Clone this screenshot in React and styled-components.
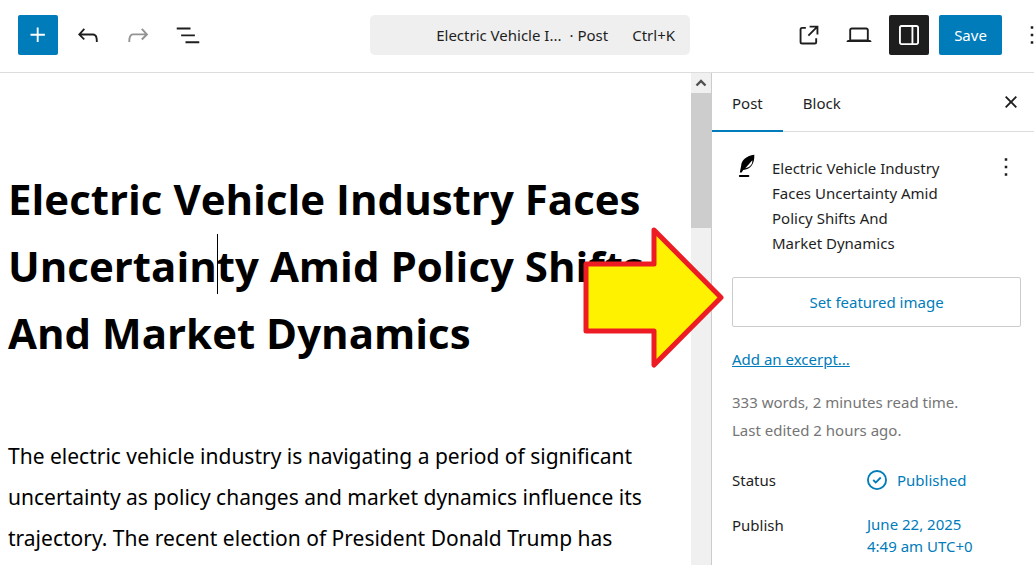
import styled, { createGlobalStyle } from 'styled-components';

const ICONS = {
  plus: 'M11 12.5V17.5H12.5V12.5H17.5V11H12.5V6H11V11H6V12.5H11Z',
  undo: 'M18.3 11.7c-.6-.6-1.4-.9-2.3-.9H6.7l2.9-3.3-1.1-1-4.5 5L8.5 16l1-1-2.7-2.7H16c.5 0 .9.2 1.3.5 1 1 1 3.4 1 4.5v.3h1.5v-.2c0-1.5 0-4.3-1.5-5.7z',
  redo: 'M15.6 6.5l-1.1 1 2.9 3.3H8c-.9 0-1.7.3-2.3.9-1.4 1.5-1.4 4.2-1.4 5.6v.2h1.5v-.3c0-1.1 0-3.5 1-4.5.3-.3.7-.5 1.3-.5h9.2L14.5 15l1.1 1.1 4.6-4.6-4.6-5z',
  listView: 'M3 6h11v1.5H3V6Zm3.5 5.5h11V13h-11v-1.5ZM21 17H10v1.5h11V17Z',
  external:
    'M19.5 4.5h-7V6h4.44l-5.97 5.97 1.06 1.06L18 7.06v4.44h1.5v-7Zm-13 1a2 2 0 0 0-2 2v10a2 2 0 0 0 2 2h10a2 2 0 0 0 2-2v-3H17v3a.5.5 0 0 1-.5.5h-10a.5.5 0 0 1-.5-.5v-10a.5.5 0 0 1 .5-.5h3V5.5h-3Z',
  desktop:
    'M20.5 16h-.7V8c0-1.1-.9-2-2-2H6.2c-1.1 0-2 .9-2 2v8h-.7c-.8 0-1.5.7-1.5 1.5h20c0-.8-.7-1.5-1.5-1.5zM5.7 8c0-.3.2-.5.5-.5h11.6c.3 0 .5.2.5.5v7.6H5.7V8z',
  drawer:
    'M18 4H6c-1.1 0-2 .9-2 2v12c0 1.1.9 2 2 2h12c1.1 0 2-.9 2-2V6c0-1.1-.9-2-2-2zm-4 14.5H6c-.3 0-.5-.2-.5-.5V6c0-.3.2-.5.5-.5h8v13zm4.5-.5c0 .3-.2.5-.5.5h-2.5v-13H18c.3 0 .5.2.5.5v12z',
  more: 'M13 19h-2v-2h2v2zm0-6h-2v-2h2v2zm0-6h-2V5h2v2z',
  close:
    'M12 13.06l3.712 3.713 1.061-1.06L13.061 12l3.712-3.712-1.06-1.06L12 10.938 8.288 7.227l-1.061 1.06L10.939 12l-3.712 3.712 1.06 1.061L12 13.061z',
  published:
    'M12 18.5a6.5 6.5 0 1 1 0-13 6.5 6.5 0 0 1 0 13ZM4 12a8 8 0 1 1 16 0 8 8 0 0 1-16 0Zm11.53-1.47-1.06-1.06L11 12.94l-1.47-1.47-1.06 1.06L11 15.06l4.53-4.53Z',
};

function Icon({ name }) {
  return (
    <svg width="30" height="30" viewBox="0 0 24 24" fill="currentColor" aria-hidden="true">
      <path fillRule="evenodd" clipRule="evenodd" d={ICONS[name]} />
    </svg>
  );
}

function FeatherIcon() {
  return (
    <svg width="30" height="30" viewBox="0 0 30 30" fill="none" aria-hidden="true">
      <path
        fillRule="evenodd"
        fill="#000"
        d="M22.3 2.8C14.6 3.8 9.4 8 9.2 13.6L7.8 20.6h1.9l1.5-2.6c7-.4 11.6-6 11.1-15.2ZM20.3 8.2c.4 4.2-2.6 7.2-7 8L20.3 8.2Z"
      />
      <path d="M7.8 24h8.6" stroke="#000" strokeWidth="1.9" strokeLinecap="round" />
    </svg>
  );
}

function TopBar() {
  return (
    <Header>
      <HeaderInner>
        <Tools>
          <ToolButton $variant="primary" aria-label="Block Inserter">
            <Icon name="plus" />
          </ToolButton>
          <ToolButton aria-label="Undo">
            <Icon name="undo" />
          </ToolButton>
          <ToolButton aria-label="Redo" disabled>
            <Icon name="redo" />
          </ToolButton>
          <ToolButton aria-label="Document Overview">
            <Icon name="listView" />
          </ToolButton>
        </Tools>
        <CommandBar>
          <span>Electric Vehicle I...</span>
          <span>· Post</span>
          <Shortcut>Ctrl+K</Shortcut>
        </CommandBar>
        <Actions>
          <ToolButton aria-label="View Post">
            <Icon name="external" />
          </ToolButton>
          <ToolButton aria-label="View">
            <Icon name="desktop" />
          </ToolButton>
          <ToolButton $variant="pressed" aria-label="Settings">
            <Icon name="drawer" />
          </ToolButton>
          <SaveButton>Save</SaveButton>
          <ToolButton aria-label="Options">
            <Icon name="more" />
          </ToolButton>
        </Actions>
      </HeaderInner>
    </Header>
  );
}

function Editor() {
  return (
    <Canvas>
      <Content>
        <Title>
          Electric Vehicle Industry Faces
          <br />
          Uncertain
          <CaretAnchor>
            <Caret />
          </CaretAnchor>
          ty Amid Policy Shifts
          <br />
          And Market Dynamics
        </Title>
        <Paragraph>
          The electric vehicle industry is navigating a period of significant
          <br />
          uncertainty as policy changes and market dynamics influence its
          <br />
          trajectory. The recent election of President Donald Trump has
        </Paragraph>
      </Content>
      <Scrollbar>
        <ScrollUp>
          <svg width="12" height="8" viewBox="0 0 12 8" fill="none" aria-hidden="true">
            <path d="M1.5 6.5 6 2l4.5 4.5" stroke="#505050" strokeWidth="2.4" />
          </svg>
        </ScrollUp>
        <ScrollThumb />
      </Scrollbar>
    </Canvas>
  );
}

function Sidebar() {
  return (
    <Settings>
      <Tabs>
        <Tab $active>Post</Tab>
        <Tab>Block</Tab>
        <CloseButton aria-label="Close Settings">
          <Icon name="close" />
        </CloseButton>
      </Tabs>
      <Panel>
        <Summary>
          <FeatherIcon />
          <SummaryTitle>
            Electric Vehicle Industry
            <br />
            Faces Uncertainty Amid
            <br />
            Policy Shifts And
            <br />
            Market Dynamics
          </SummaryTitle>
          <PlainButton aria-label="Actions">
            <Icon name="more" />
          </PlainButton>
        </Summary>
        <FeaturedImage>Set featured image</FeaturedImage>
        <ExcerptLink href="#excerpt">Add an excerpt...</ExcerptLink>
        <Meta>
          333 words, 2 minutes read time.
          <br />
          Last edited 2 hours ago.
        </Meta>
        <Row>
          <RowLabel>Status</RowLabel>
          <StatusButton>
            <Icon name="published" />
            Published
          </StatusButton>
        </Row>
        <Row>
          <RowLabel>Publish</RowLabel>
          <DateButton>
            June 22, 2025
            <br />
            4:49 am UTC+0
          </DateButton>
        </Row>
      </Panel>
    </Settings>
  );
}

export default function App() {
  return (
    <Page>
      <GlobalStyle />
      <TopBar />
      <Body>
        <Editor />
        <Sidebar />
      </Body>
      <Arrow width="144" height="144" viewBox="0 0 144 144" aria-hidden="true">
        <path
          d="M5 38h68V4l67 67.500-67 67.500v-34H5Z"
          fill="#fff200"
          stroke="#ed1c24"
          strokeWidth="5"
          strokeLinejoin="round"
        />
      </Arrow>
    </Page>
  );
}

const GlobalStyle = createGlobalStyle`
  * {
    box-sizing: border-box;
  }

  body {
    margin: 0;
    background: #fff;
    color: #1e1e1e;
    font-family: 'Segoe UI', 'Noto Sans', 'Open Sans', sans-serif;
    font-size: 15px;
  }

  button {
    font: inherit;
    color: inherit;
    background: none;
    border: none;
    padding: 0;
    cursor: pointer;
  }

  svg {
    display: block;
    flex-shrink: 0;
  }
`;

const Page = styled.div`
  position: relative;
  display: flex;
  flex-direction: column;
  height: 100vh;
  overflow: hidden;
`;

const Header = styled.header`
  flex-shrink: 0;
  overflow: hidden;
  border-bottom: 1px solid #ddd;
`;

/* the options button runs past the right edge */
const HeaderInner = styled.div`
  display: grid;
  grid-template-columns: 1fr 320px 1fr;
  align-items: center;
  width: calc(100% + 18px);
  height: 72px;
  padding: 0 0 2px 8px;
`;

const Tools = styled.div`
  display: flex;
  gap: 10px;
  padding-left: 10px;
`;

const Actions = styled.div`
  display: flex;
  justify-content: flex-end;
  gap: 10px;
`;

const ToolButton = styled.button`
  display: flex;
  align-items: center;
  justify-content: center;
  width: 40px;
  height: 40px;
  border-radius: 2px;
  background: ${({ $variant }) =>
    $variant === 'primary' ? '#007cba' : $variant === 'pressed' ? '#1e1e1e' : 'none'};
  color: ${({ $variant }) => ($variant ? '#fff' : '#1e1e1e')};

  &:disabled {
    color: #949494;
  }
`;

const SaveButton = styled.button`
  width: 63px;
  height: 40px;
  border-radius: 2px;
  background: #007cba;
  color: #fff;
`;

const CommandBar = styled.button`
  display: flex;
  align-items: center;
  justify-content: flex-end;
  gap: 8px;
  height: 40px;
  padding: 0 15px;
  border-radius: 5px;
  background: #efefef;
`;

const Shortcut = styled.span`
  margin-left: 16px;
`;

const Body = styled.div`
  display: flex;
  flex: 1;
  min-height: 0;
`;

const Canvas = styled.main`
  display: flex;
  flex: 1;
  min-width: 0;
`;

const Content = styled.article`
  flex: 1;
  min-width: 0;
  padding: 92px 0 0 8px;
  overflow: hidden;
  color: #000;
  white-space: nowrap;
`;

const Title = styled.h1`
  margin: 0;
  font-family: 'Segoe UI', 'Open Sans', sans-serif;
  font-size: 42px;
  font-weight: 700;
  line-height: 67px;
`;

const CaretAnchor = styled.span`
  position: relative;
`;

const Caret = styled.span`
  position: absolute;
  bottom: 0;
  left: 0;
  width: 1px;
  height: 60px;
  background: #000;
`;

const Paragraph = styled.p`
  margin: 70px 0 0;
  font-size: 21px;
  line-height: 41px;
`;

const Scrollbar = styled.div`
  display: flex;
  flex-direction: column;
  width: 20px;
  background: #f0f0f0;
`;

const ScrollUp = styled.div`
  display: flex;
  align-items: center;
  justify-content: center;
  height: 20px;
`;

const ScrollThumb = styled.div`
  height: 135px;
  background: #cdcdcd;
`;

const Settings = styled.aside`
  width: 323px;
  flex-shrink: 0;
  border-left: 1px solid #ccc;
  overflow: hidden;
`;

const Tabs = styled.div`
  display: flex;
  height: 59px;
  border-bottom: 1px solid #ddd;
`;

const Tab = styled.button`
  padding: 2px 20px 0;
  height: 59px;
  border-bottom: 2px solid ${({ $active }) => ($active ? '#007cba' : 'transparent')};
`;

const CloseButton = styled.button`
  margin: 0 8px 0 auto;
`;

const Panel = styled.div`
  padding: 20px 13px 0 20px;
`;

const Summary = styled.div`
  display: flex;
  align-items: flex-start;
  gap: 10px;
`;

const SummaryTitle = styled.h2`
  flex: 1;
  margin: 4px 0 0;
  font-size: 15px;
  font-weight: 400;
  line-height: 25px;
`;

const PlainButton = styled.button`
  display: flex;
`;

const FeaturedImage = styled.button`
  display: block;
  width: 100%;
  height: 50px;
  margin-top: 21px;
  border: 1px solid #ccc;
  border-radius: 2px;
  color: #007cba;
`;

const ExcerptLink = styled.a`
  display: block;
  margin-top: 20px;
  line-height: 25px;
  color: #007cba;
`;

const Meta = styled.p`
  margin: 16px 0 20px;
  line-height: 28px;
  color: #757575;
`;

const Row = styled.div`
  display: flex;
  align-items: flex-start;
  min-height: 45px;
`;

const RowLabel = styled.span`
  width: 135px;
  line-height: 32px;
`;

const StatusButton = styled.button`
  display: flex;
  align-items: center;
  gap: 5px;
  margin-left: -5px;
  line-height: 32px;
  color: #007cba;
`;

const DateButton = styled.button`
  padding-top: 4px;
  line-height: 22px;
  text-align: left;
  color: #007cba;
`;

const Arrow = styled.svg`
  position: absolute;
  top: 226px;
  left: 581px;
  pointer-events: none;
`;
